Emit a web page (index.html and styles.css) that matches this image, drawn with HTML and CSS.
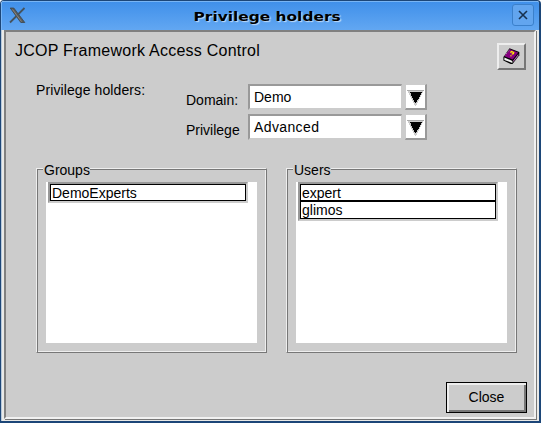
FILE: index.html
```
<!DOCTYPE html>
<html lang="en">
<head>
<meta charset="utf-8">
<title>Privilege holders</title>
<link rel="stylesheet" href="styles.css">
</head>
<body>
<div class="window">
  <header class="titlebar">
    <svg class="logo" width="17" height="17" viewBox="0 0 17 17"><path d="M1.2 1h3.6L15.8 15.5h-4z" fill="#555b5f" stroke="#3d464d" stroke-width=".8"/><path d="M15.5 1L1 15.5" stroke="#46535d" stroke-width="1.8"/><path d="M3.5 2.5l9 12" stroke="#8d8478" stroke-width="1"/></svg>
    <h1><span>Privilege holders</span></h1>
    <button class="dismiss" aria-label="Close window"><svg width="10" height="10" viewBox="0 0 10 10"><path d="M1 1l8 8M9 1L1 9" stroke="#17314f" stroke-width="1.6"/></svg></button>
  </header>
  <div class="frame">
  <main class="client">
    <div class="heading">
      <h2>JCOP Framework Access Control</h2>
      <button class="help" aria-label="Help"><svg width="17" height="17" viewBox="0 0 17 17"><path d="M6.5 .3L16.3 4v3.3L9.5 16H7.7L.4 12.5V9z" fill="#000"/><path d="M6.8 1.3L15.2 4.5 9.7 11.5 1.5 8.2z" fill="#86007f"/><path d="M1.4 9.6l8 3.3v2L1.4 11.9z" fill="#f2f2f2"/><path d="M10.3 12.6l5-6.6v1.4l-5 6.7z" fill="#c46bc0"/><path d="M1.8 7.6L6.6 1.6" stroke="#d889d5" stroke-width=".8" stroke-dasharray="1.3 .8"/><path d="M7.3 4.5l1.4-.9 2 .9-.4 1.2-1.6.5M7.4 7.6l1.2.4" fill="none" stroke="#ffec00" stroke-width="1.3"/></svg></button>
    </div>
    <section class="filter">
      <p>Privilege holders:</p>
      <div class="rows">
        <div class="row"><label>Domain:</label><div class="field">Demo</div><button class="drop" aria-label="Choose domain"><svg width="18" height="18" viewBox="0 0 18 18" shape-rendering="crispEdges"><path d="M0 0h18L9.5 17h-1z" fill="#ccc"/><path d="M0 0h18v1H0z" fill="#aaa"/><path d="M3 2h13L9.5 14h-1z"/></svg></button></div>
        <div class="row"><label>Privilege</label><div class="field wide-text">Advanced</div><button class="drop" aria-label="Choose privilege"><svg width="18" height="18" viewBox="0 0 18 18" shape-rendering="crispEdges"><path d="M0 0h18L9.5 17h-1z" fill="#ccc"/><path d="M0 0h18v1H0z" fill="#aaa"/><path d="M3 2h13L9.5 14h-1z"/></svg></button></div>
      </div>
    </section>
    <section class="lists">
      <div class="group"><h3><span>Groups</span></h3><div class="list"><ul><li>DemoExperts</li></ul></div></div>
      <div class="group"><h3><span>Users</span></h3><div class="list"><ul><li>expert</li><li>glimos</li></ul></div></div>
    </section>
    <footer><button class="close">Close</button></footer>
  </main>
  </div>
</div>
</body>
</html>
```
FILE: styles.css
```
* { box-sizing: border-box; margin: 0; padding: 0; }
body { width: 541px; height: 423px; overflow: hidden; background: #fff; font: 14px/18px "Liberation Sans", sans-serif; color: #000; }
button { font: inherit; color: inherit; }
svg { display: block; }
.window { width: 541px; height: 423px; border: 1px solid #1c4678; border-right-width: 2px; border-bottom-width: 2px; border-radius: 4px 4px 0 0; display: flex; flex-direction: column; background: #ebebeb; overflow: hidden; }
.titlebar { height: 29px; flex: none; display: flex; align-items: flex-start; padding: 3px 5px 0 7px; background: linear-gradient(#4090ea, #62a7f2); border-top: 1px solid #78b5f5; border-left: 1px solid #78b5f5; }
.logo { margin-top: 2px; }
h1 { flex: 1; text-align: center; font: bold 13px/20px "DejaVu Sans", sans-serif; padding: 2px 0 0; text-shadow: 1px 1px 1px #c5def8; }
h1 span { display: inline-block; transform: translateX(-2px) scaleX(1.185); }
.dismiss { width: 22px; height: 22px; margin-top: -1px; border: 1px solid #3b80cb; border-radius: 3px; background: #62a5ef; display: grid; place-items: center; }
.frame { flex: 1; padding: 0 2px 2px; background: #e9e9e7; border-left: 1px solid #b8c9da; }
.client { width: 532px; height: 389px; background: #ccc; border: 2px solid; border-color: #808080 #f1f1f1 #f1f1f1 #808080; box-shadow: 1px 1px #777; }
.heading { height: 38px; display: flex; justify-content: space-between; padding: 9px 8px 0 9px; }
h2 { font: 16px/20px "Liberation Sans", sans-serif; letter-spacing: .24px; }
.help { width: 29px; height: 27px; margin-top: 2px; background: #ccc; border: 2px solid; border-color: #eee #777 #777 #eee; display: grid; place-items: center; }
.filter { display: flex; margin-left: 30px; padding-top: 14px; height: 98px; }
.filter p { width: 150px; margin-top: -3px; letter-spacing: .1px; }
.rows { display: flex; flex-direction: column; gap: 4px; }
.row { height: 26px; display: flex; }
label { width: 62px; padding-top: 7px; }
.field { width: 154px; height: 26px; background: #fff; border: 2px solid; border-color: #999 #ccc #ccc #999; border-right-width: 1px; padding: 2px 4px; }
.wide-text { letter-spacing: .38px; }
.drop { width: 22px; height: 26px; margin: 0 0 0 3px; background: #fff; border: solid; border-width: 1px 2px 2px 1px; border-color: #ccc #999 #999 #ccc; padding: 4px 1px 0; }
.drop svg { width: 17px; height: 17px; }
.lists { display: flex; gap: 19px; padding-left: 30px; }
.group { width: 231px; height: 185px; border: 1px solid; border-color: #eee #777 #777 #eee; box-shadow: inset 1px 1px #777, inset -1px -1px #eee; padding: 0 9px 9px; }
h3 { font: 14px/18px "Liberation Sans", sans-serif; height: 13px; margin-left: -3px; }
h3 span { display: block; width: fit-content; padding-left: 1px; background: #ccc; height: 18px; transform: translateY(-8px); }
.list { height: 161px; background: #fff; padding: 0 9px 0 2px; }
ul { list-style: none; border: 2px solid; border-color: #999 #ccc #ccc #999; }
li { border: 1px solid #000; height: 17px; line-height: 16px; padding-left: 1px; }
li + li { height: 18px; }
footer { display: flex; justify-content: flex-end; padding: 29px 7px 0 0; }
.close { width: 81px; height: 31px; padding-bottom: 2px; border: 1px solid #000; background: #ccc; box-shadow: inset 2px 2px #eee, inset -2px -2px #777; }
```
